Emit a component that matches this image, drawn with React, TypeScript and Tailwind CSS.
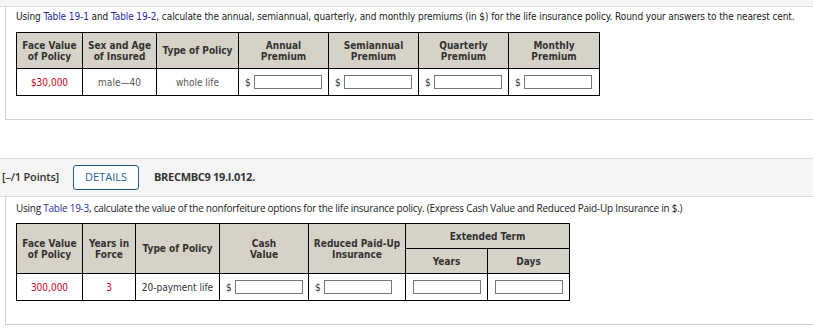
import React from "react";

const tahoma = { fontFamily: '"DejaVu Sans Condensed", "DejaVu Sans", sans-serif' };
const segoe = { fontFamily: '"Open Sans", "Noto Sans", sans-serif' };

function Money() {
  return (
    <div className="flex items-center gap-[3px] pl-[6px]">
      <span className="text-[#333]">$</span>
      <span className="block h-[14px] w-[68px] border border-[#777] bg-white" />
    </div>
  );
}

function Blank() {
  return (
    <div className="flex justify-center">
      <span className="block h-[14px] w-[68px] border border-[#777] bg-white" />
    </div>
  );
}

const th = "border border-black bg-[#d6d2c7] font-bold text-[#333] text-center leading-[11px] p-0 whitespace-nowrap";
const td = "border border-black text-center h-[27px] p-0 whitespace-nowrap";

export default function App() {
  return (
    <div className="w-[813px] h-[335px] bg-white overflow-hidden text-[10px] text-[#222]" style={tahoma}>
      <div className="h-[7px] bg-[#f5f5f5] border-b border-[#dcdcdc]" />

      {/* first question body */}
      <div className="ml-[5px] border-l border-b border-[#d0d0d0] pl-[10px] pt-[3px] pb-[23px]">
        <p className="leading-[14px] mb-[8px] whitespace-nowrap tracking-[-0.1px]">
          Using <span className="text-[#2b2ba8]">Table 19-1</span> and <span className="text-[#2b2ba8]">Table 19-2</span>, calculate the annual, semiannual, quarterly, and monthly premiums (in $) for the life insurance policy. Round your answers to the nearest cent.
        </p>
        <table className="table-fixed border-collapse w-[583px]">
          <colgroup>
            <col className="w-[66px]" />
            <col className="w-[74px]" />
            <col className="w-[82px]" />
            <col className="w-[90px]" />
            <col className="w-[90px]" />
            <col className="w-[90px]" />
            <col className="w-[91px]" />
          </colgroup>
          <thead>
            <tr className="h-[36px]">
              <th className={th}>Face Value<br />of Policy</th>
              <th className={th}>Sex and Age<br />of Insured</th>
              <th className={th}>Type of Policy</th>
              <th className={th}>Annual<br />Premium</th>
              <th className={th}>Semiannual<br />Premium</th>
              <th className={th}>Quarterly<br />Premium</th>
              <th className={th}>Monthly<br />Premium</th>
            </tr>
          </thead>
          <tbody>
            <tr>
              <td className={td + " text-[#d0021b]"}>$30,000</td>
              <td className={td + " text-[#555]"}>male—40</td>
              <td className={td + " text-[#555]"}>whole life</td>
              <td className={td}><Money /></td>
              <td className={td}><Money /></td>
              <td className={td}><Money /></td>
              <td className={td}><Money /></td>
            </tr>
          </tbody>
        </table>
      </div>

      <div className="h-[38px]" />

      {/* question header bar */}
      <div className="h-[39px] bg-[#f5f5f5] border-y border-[#dcdcdc] flex items-center pl-[2px] text-[11px]" style={segoe}>
        <span className="font-semibold text-[#333] tracking-[-0.2px]">[–/1 Points]</span>
        <span className="ml-[14px] h-[25px] w-[66px] flex items-center justify-center border border-[#1f5f8b] rounded-[3px] bg-white text-[#1f5f8b] font-medium">DETAILS</span>
        <span className="ml-[15px] font-bold text-[#333] tracking-[-0.3px]">BRECMBC9 19.I.012.</span>
      </div>

      {/* second question body */}
      <div className="ml-[5px] border-l border-b border-[#d0d0d0] pl-[10px] pt-[4px] pb-[23px]">
        <p className="leading-[14px] mb-[8px] whitespace-nowrap text-[10px] tracking-[-0.25px]" style={segoe}>
          Using <span className="text-[#2b2ba8]">Table 19-3</span>, calculate the value of the nonforfeiture options for the life insurance policy. (Express Cash Value and Reduced Paid-Up Insurance in $.)
        </p>
        <table className="table-fixed border-collapse w-[553px]">
          <colgroup>
            <col className="w-[66px]" />
            <col className="w-[53px]" />
            <col className="w-[84px]" />
            <col className="w-[89px]" />
            <col className="w-[97px]" />
            <col className="w-[82px]" />
            <col className="w-[82px]" />
          </colgroup>
          <thead>
            <tr className="h-[25px]">
              <th rowSpan={2} className={th}>Face Value<br />of Policy</th>
              <th rowSpan={2} className={th}>Years in<br />Force</th>
              <th rowSpan={2} className={th}>Type of Policy</th>
              <th rowSpan={2} className={th}>Cash<br />Value</th>
              <th rowSpan={2} className={th}>Reduced Paid-Up<br />Insurance</th>
              <th colSpan={2} className={th}>Extended Term</th>
            </tr>
            <tr className="h-[25px]">
              <th className={th}>Years</th>
              <th className={th}>Days</th>
            </tr>
          </thead>
          <tbody>
            <tr>
              <td className={td + " text-[#d0021b]"}>300,000</td>
              <td className={td + " text-[#d0021b]"}>3</td>
              <td className={td + " text-[#333]"}>20-payment life</td>
              <td className={td}><Money /></td>
              <td className={td}><Money /></td>
              <td className={td}><Blank /></td>
              <td className={td}><Blank /></td>
            </tr>
          </tbody>
        </table>
      </div>
    </div>
  );
}
